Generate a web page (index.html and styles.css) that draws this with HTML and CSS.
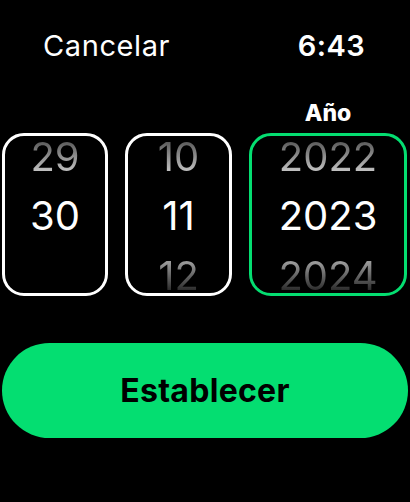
FILE: index.html
```html
<!DOCTYPE html>
<html lang="es">
<head>
<meta charset="utf-8">
<link rel="stylesheet" href="styles.css">
</head>
<body>
<div class="screen">
  <header class="top">
    <span class="cancel">Cancelar</span>
    <span class="time">6:43</span>
  </header>
  <section class="pickers">
    <div class="col col-day">
      <div class="label"></div>
      <div class="box">
        <div class="item prev">29</div>
        <div class="item cur">30</div>
        <div class="item empty"></div>
      </div>
    </div>
    <div class="col col-month">
      <div class="label"></div>
      <div class="box">
        <div class="item prev">10</div>
        <div class="item cur">11</div>
        <div class="item next">12</div>
      </div>
    </div>
    <div class="col col-year">
      <div class="label">Año</div>
      <div class="box active">
        <div class="item prev">2022</div>
        <div class="item cur">2023</div>
        <div class="item next">2024</div>
      </div>
    </div>
  </section>
  <button class="set">Establecer</button>
</div>
</body>
</html>
```
FILE: styles.css
```css
html, body {
  margin: 0;
  padding: 0;
  background: #000;
}
.screen {
  width: 410px;
  height: 502px;
  background: #000;
  color: #fff;
  font-family: Inter, "Noto Sans", sans-serif;
  display: flex;
  flex-direction: column;
  overflow: hidden;
}
.top {
  display: flex;
  justify-content: space-between;
  align-items: center;
  padding: 26px 45px 0 43px;
  height: 40px;
  font-size: 29px;
  line-height: 40px;
}
.cancel {
  font-weight: 400;
  letter-spacing: 0.6px;
}
.time {
  font-weight: 600;
  letter-spacing: 0.4px;
}
.pickers {
  display: flex;
  gap: 17px;
  padding: 0 3px 0 2px;
  margin-top: 34px;
}
.col {
  display: flex;
  flex-direction: column;
}
.col-day { width: 106px; }
.col-month { width: 107px; }
.col-year { width: 158px; }
.label {
  height: 33px;
  text-align: center;
  font-size: 23px;
  font-weight: 800;
  line-height: 26px;
}
.box {
  height: 163px;
  box-sizing: border-box;
  border: 3px solid #fff;
  border-radius: 22px;
  overflow: hidden;
  display: flex;
  flex-direction: column;
  align-items: center;
}
.box.active {
  border-color: #04de71;
}
.item {
  font-size: 40px;
  font-weight: 400;
  text-align: center;
  flex-shrink: 0;
}
.item.prev {
  height: 50px;
  line-height: 42px;
  background: linear-gradient(to bottom, #5c5c5c 12%, #c4c4c4 72%);
  -webkit-background-clip: text;
  background-clip: text;
  color: transparent;
}
.item.cur {
  height: 60px;
  line-height: 60px;
  color: #fff;
}
.item.next,
.item.empty {
  height: 47px;
  line-height: 60px;
  overflow: hidden;
}
.item.next {
  background: linear-gradient(to bottom, #9a9a9a 35%, #2a2a2a 95%);
  -webkit-background-clip: text;
  background-clip: text;
  color: transparent;
}
.set {
  margin: 47px 2px 0 2px;
  height: 95px;
  border: none;
  border-radius: 48px;
  background: #04de71;
  color: #000;
  font-family: Inter, "Noto Sans", sans-serif;
  font-size: 32px;
  font-weight: 700;
  letter-spacing: 0.3px;
  padding: 0;
}
```
